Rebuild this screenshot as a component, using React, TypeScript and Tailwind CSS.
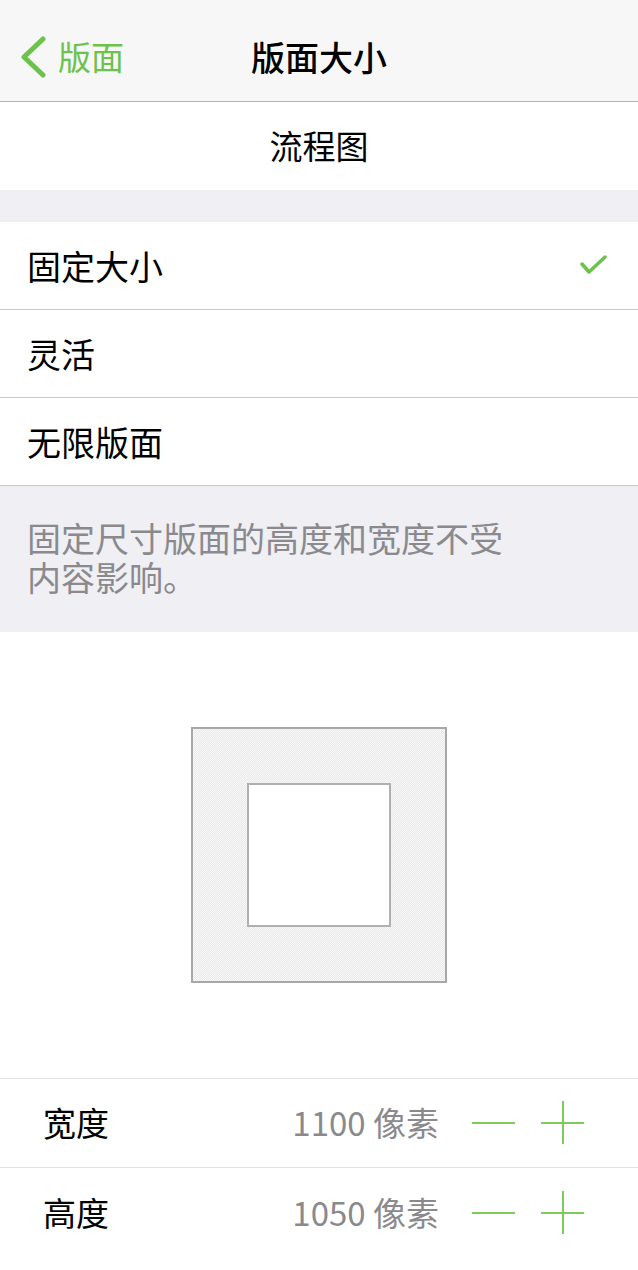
import React from "react";

const GREEN = "#6cc24a";

function BackChevron() {
  return (
    <svg width="28" height="42" viewBox="0 0 28 42" className="shrink-0">
      <path
        d="M23 3 L4 21 L23 39"
        fill="none"
        stroke={GREEN}
        strokeWidth="5"
        strokeLinecap="round"
        strokeLinejoin="round"
      />
    </svg>
  );
}

function Check() {
  return (
    <svg width="28" height="24" viewBox="0 0 28 24">
      <path
        d="M2 10 L9 18 L25 3"
        fill="none"
        stroke={GREEN}
        strokeWidth="3.5"
        strokeLinecap="round"
        strokeLinejoin="round"
      />
    </svg>
  );
}

function Stepper() {
  return (
    <div className="flex items-center gap-[26px]">
      <button aria-label="减少" className="flex h-[44px] w-[43px] items-center justify-center">
        <span className="block h-[2px] w-[43px] bg-[#7ccb5c]" />
      </button>
      <button aria-label="增加" className="relative flex h-[44px] w-[43px] items-center justify-center">
        <span className="block h-[2px] w-[43px] bg-[#7ccb5c]" />
        <span className="absolute left-1/2 top-0 h-[43px] w-[2px] -translate-x-1/2 bg-[#7ccb5c]" />
      </button>
    </div>
  );
}

const modes = [
  { label: "固定大小", selected: true },
  { label: "灵活", selected: false },
  { label: "无限版面", selected: false },
];

const dims = [
  { label: "宽度", value: "1100 像素" },
  { label: "高度", value: "1050 像素" },
];

export default function App() {
  return (
    <div className="min-h-[1270px] w-[638px] bg-white font-['Noto_Sans_CJK_SC','Noto_Sans',sans-serif] text-black">
      {/* navigation bar */}
      <header className="grid h-[102px] grid-cols-[1fr_auto_1fr] items-center border-b border-[#b4b4b4] bg-[#f7f7f8] pt-[12px]">
        <button className="flex items-center gap-[10px] pl-[20px] text-[33px] leading-none text-[#6cc24a]">
          <BackChevron />
          <span>版面</span>
        </button>
        <h1 className="text-[34px] font-medium leading-none">版面大小</h1>
        <div />
      </header>

      <div className="flex h-[88px] items-center justify-center text-[33px]">流程图</div>

      <div className="h-[32px] bg-[#efeff4]" />

      {/* board size mode */}
      <ul>
        {modes.map((m) => (
          <li
            key={m.label}
            className="flex h-[88px] items-center justify-between border-b border-[#c8c7cc] pl-[27px] pr-[30px] text-[34px]"
          >
            <span>{m.label}</span>
            {m.selected && <Check />}
          </li>
        ))}
      </ul>

      <div className="h-[146px] bg-[#efeff4] px-[27px] pt-[32px] text-[34px] leading-[39px] text-[#8a8a8e]">
        固定尺寸版面的高度和宽度不受
        <br />
        内容影响。
      </div>

      {/* board preview */}
      <div className="flex justify-center py-[95px]">
        <div className="flex h-[256px] w-[256px] items-center justify-center border-2 border-[#a8a8a8] bg-[image:repeating-conic-gradient(#e9e9e9_0_25%,#f8f8f8_0_50%)] bg-[length:2px_2px]">
          <div className="h-[144px] w-[144px] border-2 border-[#b0b0b0] bg-white" />
        </div>
      </div>

      {/* dimensions */}
      <div className="border-t border-[#e3e3e6]">
        {dims.map((d, i) => (
          <div
            key={d.label}
            className={`flex h-[89px] items-center pl-[43px] pr-[54px] text-[33px] ${
              i === 0 ? "border-b border-[#e3e3e6]" : ""
            }`}
          >
            <span className="flex-1">{d.label}</span>
            <span className="mr-[33px] text-[#8a8a8e]">{d.value}</span>
            <Stepper />
          </div>
        ))}
      </div>
    </div>
  );
}
